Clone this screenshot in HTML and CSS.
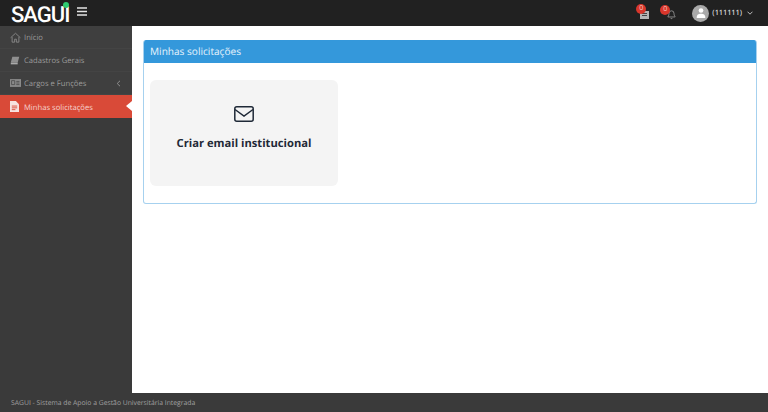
FILE: index.html
```html
<!DOCTYPE html>
<html lang="pt-BR">
<head>
<meta charset="utf-8">
<title>SAGUI</title>
<link rel="stylesheet" href="styles.css">
</head>
<body>
<header class="topbar">
  <div class="brand">
    <span class="logo">SAGUI<i class="logo-dot"></i></span>
    <svg class="burger" width="10" height="9" viewBox="0 0 10 9"><path d="M0 1h10M0 4.500h10M0 8h10" stroke="#e4e4e4" stroke-width="1.400"/></svg>
  </div>
  <div class="top-actions">
    <span class="notif notif-tasks">
      <svg width="9" height="9" viewBox="0 0 9 9"><path d="M0 1h9v8H0z" fill="#b5b5b5"/><path d="M2 3.500h5M2 5.500h5" stroke="#444" stroke-width="1"/></svg>
      <b class="badge">0</b>
    </span>
    <span class="notif notif-bell">
      <svg width="9" height="11" viewBox="0 0 11 12"><path d="M5.500 1.500a3 3 0 0 0-3 3c0 3-1.500 4-1.500 4.500h9c0-.5-1.500-1.500-1.500-4.500a3 3 0 0 0-3-3zM4.300 10.200a1.300 1.300 0 0 0 2.400 0" fill="none" stroke="#9a9a9a" stroke-width="1"/></svg>
      <b class="badge">0</b>
    </span>
    <span class="user">
      <span class="avatar"><svg width="10" height="10" viewBox="0 0 12 12"><circle cx="6" cy="3" r="2.800" fill="#fff"/><path d="M.8 12c0-4 2-5 5.200-5s5.200 1 5.200 5z" fill="#fff"/></svg></span>
      <span class="user-name">(111111)</span>
      <svg class="user-caret" width="6" height="4" viewBox="0 0 6 4"><path d="M.5.700 3 3.200 5.500.7" fill="none" stroke="#bbb" stroke-width="1"/></svg>
    </span>
  </div>
</header>
<div class="middle">
  <nav class="sidebar">
    <a class="nav-item">
      <span class="nav-icon"><svg width="11" height="11" viewBox="0 0 13 12"><path d="M.7 6.300 6.500 1l5.800 5.300M2.500 5.500v6h3V8h2v3.500h3v-6" fill="none" stroke="#8f8f8f" stroke-width="1"/></svg></span>
      <span class="nav-label">Início</span>
    </a>
    <a class="nav-item">
      <span class="nav-icon"><svg width="10" height="9" viewBox="0 0 13 11"><path d="M3 .5h9L10 8.500H1z" fill="#8f8f8f"/><path d="M1 8.500h9v2H1z" fill="#aaa"/></svg></span>
      <span class="nav-label">Cadastros Gerais</span>
    </a>
    <a class="nav-item">
      <span class="nav-icon"><svg width="11" height="8" viewBox="0 0 14 10"><path d="M0 0h14v10H0z" fill="#8a8a8a"/><path d="M2 2h4v5H2zM8 3h4M8 5h4M8 7h4" fill="none" stroke="#4a4a4a" stroke-width="1"/></svg></span>
      <span class="nav-label">Cargos e Funções</span>
      <svg class="nav-chevron" width="5" height="7" viewBox="0 0 5 7"><path d="M4 .8 1.200 3.500 4 6.200" fill="none" stroke="#8f8f8f" stroke-width="1"/></svg>
    </a>
    <a class="nav-item nav-active">
      <span class="nav-icon"><svg width="9" height="11" viewBox="0 0 10 12"><path d="M0 0h6.500L10 3.500V12H0z" fill="#f6e3e0"/><path d="M2 5.500h6M2 7.500h6M2 9.500h4" stroke="#d94a38" stroke-width="1"/></svg></span>
      <span class="nav-label">Minhas solicitações</span>
    </a>
  </nav>
  <main class="content">
    <section class="panel">
      <h1 class="panel-head">Minhas solicitações</h1>
      <div class="panel-body">
        <a class="tile">
          <svg class="tile-icon" width="20" height="16" viewBox="0 0 20 16"><rect x=".8" y=".8" width="18.400" height="14.400" rx="2" fill="none" stroke="#1f2937" stroke-width="1.500"/><path d="m1 3.500 9 6.500 9-6.500" fill="none" stroke="#1f2937" stroke-width="1.500"/></svg>
          <strong class="tile-label">Criar email institucional</strong>
        </a>
      </div>
    </section>
  </main>
</div>
<footer class="footer">SAGUI - Sistema de Apoio a Gestão Universitária Integrada</footer>
</body>
</html>
```
FILE: styles.css
```css
* { box-sizing: border-box; }
html, body { height: 100%; }
body {
  margin: 0;
  display: flex;
  flex-direction: column;
  height: 412px;
  overflow: hidden;
  font-family: "Open Sans", sans-serif;
  background: #fff;
  text-rendering: geometricPrecision;
}
.topbar {
  height: 26px;
  flex: none;
  background: #212121;
  display: flex;
  justify-content: space-between;
  align-items: stretch;
}
.brand { display: flex; align-items: flex-start; padding-left: 11px; }
.logo {
  position: relative;
  font: 500 22px/1 Roboto, sans-serif;
  color: #fff;
  letter-spacing: -1px;
  margin-top: 5px;
  width: 66px;
}
.logo-dot {
  position: absolute;
  left: 52px;
  top: -3px;
  width: 6px;
  height: 6px;
  border-radius: 50%;
  background: #2ecc71;
}
.burger { margin-top: 7px; }
.top-actions { display: flex; align-items: center; padding-right: 15px; }
.notif { position: relative; display: flex; align-items: center; height: 100%; }
.notif-tasks { margin-right: 18px; padding-top: 3px; }
.notif-bell { margin-right: 16px; padding-top: 2px; }
.badge {
  position: absolute;
  top: 4px;
  width: 10px;
  height: 10px;
  border-radius: 50%;
  background: #d9362b;
  color: #f5c9c5;
  font: 400 7px/10px "Open Sans", sans-serif;
  text-align: center;
}
.notif-tasks .badge { left: -4px; }
.notif-bell .badge { left: -7px; top: 5px; }
.user { display: flex; align-items: center; }
.avatar {
  width: 17px;
  height: 17px;
  border-radius: 50%;
  background: #a9a9a9;
  display: flex;
  align-items: center;
  justify-content: center;
  margin-right: 3px;
  overflow: hidden;
}
.user-name { font-size: 7.300px; font-weight: 600; color: #d4d4d4; margin-right: 5px; }
.middle { flex: 1; display: flex; min-height: 0; }
.sidebar { width: 132px; flex: none; background: #3a3a3a; }
.nav-item {
  position: relative;
  display: flex;
  align-items: center;
  height: 23px;
  padding-left: 10px;
  font-size: 7.650px;
  color: #9b9b9b;
  border-bottom: 1px solid #444;
  background: #3f3f3f;
}
.nav-icon { flex: none; width: 14px; display: flex; align-items: center; }
.nav-label { flex: 1; padding-top: 2px; }
.nav-chevron { margin-right: 11px; }
.nav-active { background: #d94a38; color: #f6d2cd; border-bottom: 0; }
.nav-active::after {
  content: "";
  position: absolute;
  right: 0;
  top: 6px;
  border-style: solid;
  border-width: 5.500px 6px 5.500px 0;
  border-color: transparent #fff transparent transparent;
}
.content { flex: 1; min-width: 0; padding: 14px 11px 0; }
.panel {
  border: 1px solid #a6d1ef;
  border-top: 0;
  border-radius: 3px;
  height: 164px;
  overflow: hidden;
}
.panel-head {
  margin: 0 -1px;
  height: 23px;
  padding-left: 7px;
  background: #3498db;
  color: #e6f3fb;
  font-size: 10.100px;
  font-weight: 400;
  line-height: 23px;
}
.panel-body { padding: 17px 6px; }
.tile {
  width: 188px;
  height: 106px;
  background: #f4f4f4;
  border-radius: 6px;
  display: flex;
  flex-direction: column;
  align-items: center;
  padding-top: 26px;
}
.tile-icon { display: block; }
.tile-label {
  margin-top: 14px;
  font-size: 11.200px;
  line-height: 16px;
  font-weight: 700;
  color: #1f2937;
}
.footer {
  height: 19px;
  flex: none;
  background: #3a3a3a;
  color: #a0a0a0;
  font-size: 6.800px;
  line-height: 20px;
  padding-left: 11px;
}
```
